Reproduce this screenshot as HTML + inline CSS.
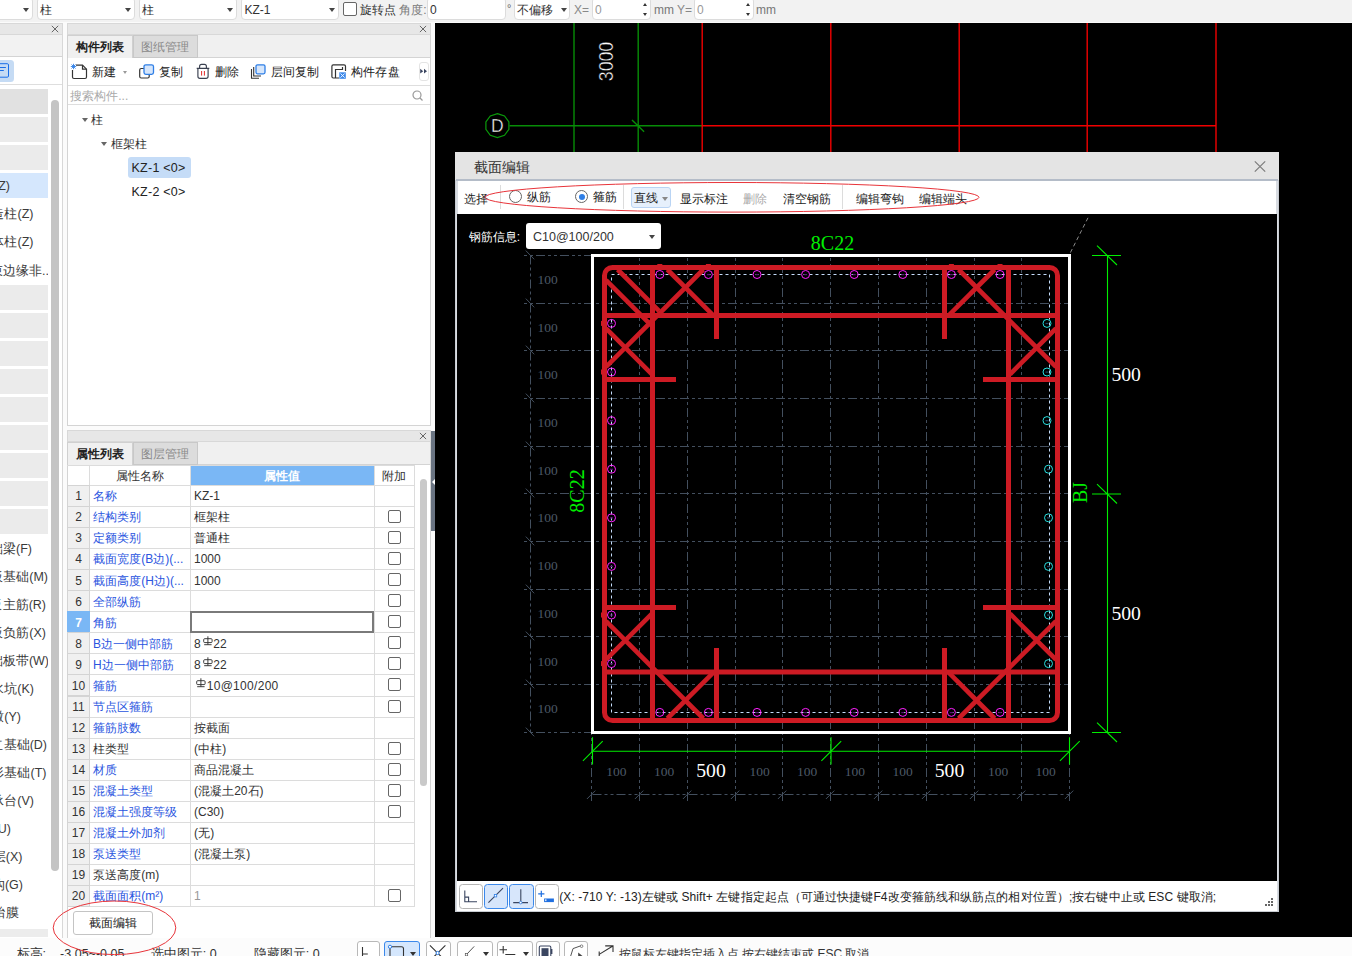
<!DOCTYPE html>
<html><head><meta charset="utf-8"><title>截面编辑</title>
<style>
*{box-sizing:border-box;margin:0;padding:0}
html,body{width:1352px;height:956px;overflow:hidden;background:#fbfbfb;font-family:"Liberation Sans",sans-serif;font-size:12px;color:#333}
.a{position:absolute}
.t{position:absolute;white-space:nowrap;line-height:16px;height:16px}
.combo{position:absolute;background:#fff;border:1px solid #dcdcdc;border-radius:4px}
.car{position:absolute;width:0;height:0;border-left:3px solid transparent;border-right:3px solid transparent;border-top:4px solid #444}
.cb{position:absolute;width:13px;height:13px;border:1px solid #666;border-radius:2px;background:#fff}
.hdr{position:absolute;background:#e7e7e7;border:1px solid #d8d8d8}
.bar{position:absolute;left:0;width:48px;height:25px;background:#ebebeb}
.lt{position:absolute;white-space:nowrap;font-size:12.5px;line-height:18px;color:#3a3a3a}
.rn{position:absolute;left:68px;width:22px;height:22px;background:#f0f0f0;border:1px solid #d0d0d0;text-align:center;font-size:12px;line-height:20px;color:#333}
.nm{position:absolute;left:93px;white-space:nowrap;font-size:12px;line-height:20px;color:#2a5bd7}
.vl{position:absolute;left:194px;white-space:nowrap;font-size:12px;line-height:20px;color:#333}
.btn{position:absolute;background:#fff;border:1px solid #c4c4c4;border-radius:3px}
.j{text-align-last:justify;text-justify:inter-character}
</style></head><body>

<div class="a" style="left:0;top:0;width:1352px;height:21.6px;background:#f2f2f2"></div>
<div class="combo" style="left:-10px;top:-3px;width:43px;height:23px"></div>
<div class="car" style="left:22.5px;top:8px"></div>
<div class="combo" style="left:37px;top:-3px;width:98px;height:23px"></div>
<div class="t j" style="left:40px;top:2px;font-size:12px;color:#333;width:12.25px">柱</div>
<div class="car" style="left:124.5px;top:8px"></div>
<div class="combo" style="left:139px;top:-3px;width:98px;height:23px"></div>
<div class="t j" style="left:142px;top:2px;font-size:12px;color:#333;width:12.25px">柱</div>
<div class="car" style="left:226.5px;top:8px"></div>
<div class="combo" style="left:241px;top:-3px;width:98px;height:23px"></div>
<div class="t" style="left:244.5px;top:2px;font-size:12px;color:#333">KZ-1</div>
<div class="car" style="left:328.5px;top:8px"></div>
<div class="cb" style="left:343px;top:2px;width:14px;height:14px"></div>
<div class="t j" style="left:360px;top:2px;font-size:12px;width:36.25px">旋转点</div>
<div class="t j" style="left:399px;top:2px;font-size:12px;color:#7a7a7a;width:27.59px">角度:</div>
<div class="combo" style="left:426.5px;top:-3px;width:79.0px;height:23px"></div>
<div class="t" style="left:430px;top:2px;font-size:12px;color:#333">0</div>
<div class="t" style="left:507px;top:0px;font-size:11px;color:#666">°</div>
<div class="combo" style="left:514px;top:-3px;width:56px;height:23px"></div>
<div class="t j" style="left:517px;top:2px;font-size:12px;color:#333;width:36.25px">不偏移</div>
<div class="car" style="left:561px;top:8px"></div>
<div class="t" style="left:574px;top:2px;font-size:12px;color:#888">X=</div>
<div class="combo" style="left:592px;top:-3px;width:59px;height:23px"></div>
<div class="t" style="left:595px;top:2px;font-size:12px;color:#999">0</div>
<div class="t" style="left:654px;top:2px;font-size:12px;color:#777">mm</div>
<div class="t" style="left:677px;top:2px;font-size:12px;color:#888">Y=</div>
<div class="combo" style="left:694px;top:-3px;width:59.5px;height:23px"></div>
<div class="t" style="left:697px;top:2px;font-size:12px;color:#999">0</div>
<div class="t" style="left:756px;top:2px;font-size:12px;color:#777">mm</div>
<div class="a" style="left:643.0px;top:3px;width:0;height:0;border-left:2.5px solid transparent;border-right:2.5px solid transparent;border-bottom:3.5px solid #333"></div>
<div class="a" style="left:643.0px;top:13px;width:0;height:0;border-left:2.5px solid transparent;border-right:2.5px solid transparent;border-top:3.5px solid #333"></div>
<div class="a" style="left:745.5px;top:3px;width:0;height:0;border-left:2.5px solid transparent;border-right:2.5px solid transparent;border-bottom:3.5px solid #333"></div>
<div class="a" style="left:745.5px;top:13px;width:0;height:0;border-left:2.5px solid transparent;border-right:2.5px solid transparent;border-top:3.5px solid #333"></div>
<div class="a" style="left:0;top:23px;width:63px;height:915px;background:#fff;border-right:1px solid #d8d8d8"></div>
<div class="hdr" style="left:-1px;top:23px;width:64px;height:12px"></div>
<div class="a" style="left:0;top:35px;width:62px;height:22px;background:#f2f2f2;border-bottom:1px solid #d4d4d4"></div>
<div class="a" style="left:0;top:84.2px;width:62px;height:1px;background:#dedede"></div>
<svg class="a" style="left:49px;top:23.3px" width="12" height="12" viewBox="-6 -6 12 12"><path d="M-3.2 -3.2L3.2 3.2M3.2 -3.2L-3.2 3.2" stroke="#666" stroke-width="1" fill="none"/></svg>
<div class="a" style="left:-6px;top:60px;width:20px;height:22px;background:#c5dbf4;border-radius:3.5px"></div>
<svg class="a" style="left:0;top:62px" width="12" height="18" viewBox="0 0 12 18"><path d="M-2 1.7H7.3Q8.5 1.7 8.5 2.9V14Q8.5 15.2 7.3 15.2H-2" stroke="#1a6fe8" stroke-width="1" fill="none"/><path d="M0 5.5H5.9M0 8.5H3.8" stroke="#1a6fe8" stroke-width="1"/></svg>
<div class="bar" style="top:89px;background:#e1e1e1"></div>
<div class="bar" style="top:117px;background:#ebebeb"></div>
<div class="bar" style="top:145px;background:#ebebeb"></div>
<div class="bar" style="top:173px;background:#d5e7fd"></div>
<div class="bar" style="top:285px;background:#ebebeb"></div>
<div class="bar" style="top:313px;background:#ebebeb"></div>
<div class="bar" style="top:341px;background:#ebebeb"></div>
<div class="bar" style="top:369px;background:#ebebeb"></div>
<div class="bar" style="top:397px;background:#ebebeb"></div>
<div class="bar" style="top:425px;background:#ebebeb"></div>
<div class="bar" style="top:453px;background:#ebebeb"></div>
<div class="bar" style="top:481px;background:#ebebeb"></div>
<div class="bar" style="top:509px;background:#ebebeb"></div>
<div class="bar" style="top:929px;height:8px;background:#ececec"></div>
<div class="a" style="left:0;top:176.5px;width:48px;height:18px;overflow:hidden"><div class="lt j" style="right:38px;top:0;width:29.22px">柱(Z)</div></div>
<div class="a" style="left:0;top:205px;width:48px;height:18px;overflow:hidden"><div class="lt j" style="right:14.5px;top:0;width:55.22px">构造柱(Z)</div></div>
<div class="a" style="left:0;top:233px;width:48px;height:18px;overflow:hidden"><div class="lt j" style="right:14.5px;top:0;width:55.22px">砌体柱(Z)</div></div>
<div class="a" style="left:0;top:261.5px;width:48px;height:18px;overflow:hidden"><div class="lt j" style="right:-1px;top:0;width:72.20px">约束边缘非..</div></div>
<div class="a" style="left:0;top:540px;width:48px;height:18px;overflow:hidden"><div class="lt j" style="right:16px;top:0;width:55.22px">基础梁(F)</div></div>
<div class="a" style="left:0;top:568px;width:48px;height:18px;overflow:hidden"><div class="lt j" style="right:0px;top:0;width:71.00px">筏板基础(M)</div></div>
<div class="a" style="left:0;top:596px;width:48px;height:18px;overflow:hidden"><div class="lt j" style="right:2px;top:0;width:69.61px">筏板主筋(R)</div></div>
<div class="a" style="left:0;top:624px;width:48px;height:18px;overflow:hidden"><div class="lt j" style="right:2px;top:0;width:68.92px">筏板负筋(X)</div></div>
<div class="a" style="left:0;top:652px;width:48px;height:18px;overflow:hidden"><div class="lt j" style="right:-1px;top:0;width:72.38px">基础板带(W)</div></div>
<div class="a" style="left:0;top:680px;width:48px;height:18px;overflow:hidden"><div class="lt j" style="right:14px;top:0;width:55.92px">集水坑(K)</div></div>
<div class="a" style="left:0;top:708px;width:48px;height:18px;overflow:hidden"><div class="lt j" style="right:27px;top:0;width:42.92px">柱墩(Y)</div></div>
<div class="a" style="left:0;top:736px;width:48px;height:18px;overflow:hidden"><div class="lt j" style="right:1px;top:0;width:69.61px">独立基础(D)</div></div>
<div class="a" style="left:0;top:764px;width:48px;height:18px;overflow:hidden"><div class="lt j" style="right:1.5px;top:0;width:68.22px">条形基础(T)</div></div>
<div class="a" style="left:0;top:792px;width:48px;height:18px;overflow:hidden"><div class="lt j" style="right:14px;top:0;width:55.92px">桩承台(V)</div></div>
<div class="a" style="left:0;top:820px;width:48px;height:18px;overflow:hidden"><div class="lt j" style="right:37px;top:0;width:30.61px">桩(U)</div></div>
<div class="a" style="left:0;top:848px;width:48px;height:18px;overflow:hidden"><div class="lt j" style="right:25.5px;top:0;width:42.92px">垫层(X)</div></div>
<div class="a" style="left:0;top:876px;width:48px;height:18px;overflow:hidden"><div class="lt j" style="right:25px;top:0;width:44.31px">地沟(G)</div></div>
<div class="a" style="left:0;top:904px;width:48px;height:18px;overflow:hidden"><div class="lt j" style="right:29.5px;top:0;width:39.25px">砖胎膜</div></div>
<div class="a" style="left:51px;top:100px;width:8px;height:770.5px;background:#c4c4c4;border-radius:4px"></div>
<div class="a" style="left:67px;top:23px;width:364px;height:403px;background:#fff;border:1px solid #d4d4d4"></div>
<div class="hdr" style="left:67px;top:23px;width:364px;height:12px"></div>
<svg class="a" style="left:417px;top:23.2px" width="12" height="12" viewBox="-6 -6 12 12"><path d="M-3.1 -3.1L3.1 3.1M3.1 -3.1L-3.1 3.1" stroke="#666" stroke-width="1" fill="none"/></svg>
<div class="a" style="left:68px;top:35px;width:362px;height:23px;background:#f0f0f0;border-bottom:1px solid #d4d4d4"></div>
<div class="a" style="left:67px;top:35px;width:66px;height:23px;background:#f0f0f0;border:1px solid #d0d0d0;border-bottom:none"></div>
<div class="a" style="left:132.5px;top:35px;width:65px;height:22.5px;background:#dcdcdc;border:1px solid #c8c8c8"></div>
<div class="t j" style="left:76px;top:38.5px;font-size:12px;font-weight:bold;color:#222;width:48.25px">构件列表</div>
<div class="t j" style="left:141px;top:38.5px;font-size:12px;color:#8a8a8a;width:48.25px">图纸管理</div>
<div class="a" style="left:68px;top:85px;width:362px;height:1px;background:#dedede"></div>
<div class="a" style="left:68px;top:104px;width:362px;height:1px;background:#dedede"></div>
<div class="t j" style="left:92px;top:64px;font-size:12px;color:#222;width:24.25px">新建</div>
<div class="t j" style="left:158.7px;top:64px;font-size:12px;color:#222;width:24.25px">复制</div>
<div class="t j" style="left:215px;top:64px;font-size:12px;color:#222;width:24.25px">删除</div>
<div class="t j" style="left:271px;top:64px;font-size:12px;color:#222;width:48.25px">层间复制</div>
<div class="t j" style="left:351.3px;top:64px;font-size:12px;color:#222;width:48.25px">构件存盘</div>
<div class="car" style="left:123px;top:71px;border-top-color:#999;border-left-width:2.7px;border-right-width:2.7px;border-top-width:3.5px"></div>
<svg class="a" style="left:70px;top:62px" width="20" height="20" viewBox="0 0 20 20"><path d="M6 3.2H12.5L16.5 7.2V15Q16.5 16.5 15 16.5H4Q2.5 16.5 2.5 15V8" stroke="#333" stroke-width="1.2" fill="none"/><path d="M12.5 3.2V7.2H16.5" stroke="#333" stroke-width="1.2" fill="none"/><path d="M1.5 2.5L5.5 6.5M5.5 2.5L1.5 6.5M3.5 1.8V7.2M0.8 4.5H6.2" stroke="#2f7fe6" stroke-width="0.9"/></svg>
<svg class="a" style="left:138px;top:62px" width="18" height="20" viewBox="0 0 18 20"><rect x="1.7" y="6.5" width="9.5" height="9.5" rx="1.5" stroke="#333" stroke-width="1.2" fill="none"/><rect x="6" y="2.8" width="9.5" height="9.5" rx="1.8" stroke="#2f7fe6" stroke-width="1.3" fill="#d6e6fb"/></svg>
<svg class="a" style="left:195px;top:62px" width="16" height="20" viewBox="0 0 16 20"><path d="M1.7 6.4H14.3M4.6 6.4V4.4Q4.6 2.4 6.6 2.4H9.4Q11.4 2.4 11.4 4.4V6.4M2.9 6.4V14.3Q2.9 16.4 5 16.4H11Q13.1 16.4 13.1 14.3V6.4" stroke="#3a4050" stroke-width="1.15" fill="none"/><path d="M6.6 9V13.6M9.4 9V13.6" stroke="#e02020" stroke-width="0.95"/></svg>
<svg class="a" style="left:249px;top:62px" width="18" height="20" viewBox="0 0 18 20"><path d="M2.5 7V16.3H10M4.7 5V14H12" stroke="#333" stroke-width="1.1" fill="none"/><rect x="7" y="2.8" width="9" height="9" rx="1.5" stroke="#2f7fe6" stroke-width="1.3" fill="#d6e6fb"/></svg>
<svg class="a" style="left:330px;top:62px" width="18" height="20" viewBox="0 0 18 20"><path d="M9 16H3.3Q1.9 16 1.9 14.5V4.2Q1.9 2.8 3.3 2.8H14Q15.5 2.8 15.5 4.2V9" stroke="#333" stroke-width="1.2" fill="none"/><path d="M5.5 16V7.5H12.5V5" stroke="#333" stroke-width="1.2" fill="none"/><rect x="9.3" y="10.3" width="6.5" height="6.5" fill="#3b88ea"/><path d="M10.5 11.5L14.6 15.6M14.6 11.5L10.5 15.6" stroke="#fff" stroke-width="0.9"/></svg>
<div class="a" style="left:418.5px;top:61.5px;width:10px;height:19px;background:#fff;border:1px solid #e4e4e4;border-radius:3px"></div>
<svg class="a" style="left:419px;top:66px" width="10" height="10" viewBox="0 0 10 10"><path d="M1.2 2.8L4.2 5.2L1.2 7.6ZM5 2.8L8 5.2L5 7.6Z" fill="#3a4560"/></svg>
<div class="t j" style="left:70px;top:87.5px;font-size:12px;color:#aaa;width:58.27px">搜索构件...</div>
<svg class="a" style="left:411px;top:89px" width="14" height="14" viewBox="0 0 14 14"><circle cx="6" cy="6" r="4" stroke="#999" stroke-width="1.2" fill="none"/><path d="M9 9L11.5 11.5" stroke="#999" stroke-width="1.3"/></svg>
<div class="car" style="left:81.7px;top:118px;border-top-color:#666"></div>
<div class="t j" style="left:91px;top:111.5px;font-size:12px;width:12.25px">柱</div>
<div class="car" style="left:101px;top:142px;border-top-color:#666"></div>
<div class="t j" style="left:110.5px;top:135.5px;font-size:12px;width:36.25px">框架柱</div>
<div class="a" style="left:128px;top:157px;width:63px;height:21px;background:#c5dcf7;border-radius:3px"></div>
<div class="t" style="left:131.5px;top:159.5px;font-size:12.5px;letter-spacing:0.25px;color:#222">KZ-1 &lt;0&gt;</div>
<div class="t" style="left:131.5px;top:183.5px;font-size:12.5px;letter-spacing:0.25px;color:#222">KZ-2 &lt;0&gt;</div>
<div class="a" style="left:67px;top:430px;width:364px;height:508px;background:#fff;border:1px solid #d4d4d4;border-bottom:none"></div>
<div class="hdr" style="left:67px;top:430px;width:364px;height:12px"></div>
<svg class="a" style="left:417px;top:430px" width="12" height="12" viewBox="-6 -6 12 12"><path d="M-3.1 -3.1L3.1 3.1M3.1 -3.1L-3.1 3.1" stroke="#666" stroke-width="1" fill="none"/></svg>
<div class="a" style="left:68px;top:442px;width:362px;height:23px;background:#f0f0f0;border-bottom:1px solid #d4d4d4"></div>
<div class="a" style="left:67px;top:442px;width:66px;height:23px;background:#f0f0f0;border:1px solid #d0d0d0;border-bottom:none"></div>
<div class="a" style="left:132.5px;top:442px;width:65px;height:22.5px;background:#dcdcdc;border:1px solid #c8c8c8"></div>
<div class="t j" style="left:76px;top:445.5px;font-size:12px;font-weight:bold;color:#222;width:48.25px">属性列表</div>
<div class="t j" style="left:141px;top:445.5px;font-size:12px;color:#8a8a8a;width:48.25px">图层管理</div>
<div class="a" style="left:190px;top:465px;width:184px;height:21px;background:#7ab7f5"></div>
<div class="t j" style="left:116px;top:467.5px;font-size:12px;width:48.25px">属性名称</div>
<div class="t j" style="left:263.5px;top:467.5px;font-size:12px;color:#fff;font-weight:bold;width:36.25px">属性值</div>
<div class="t j" style="left:382px;top:467.5px;font-size:12px;width:24.25px">附加</div>
<div class="a" style="left:67px;top:465.00px;width:348px;height:1px;background:#dcdcdc"></div>
<div class="a" style="left:67px;top:485.00px;width:348px;height:1px;background:#dcdcdc"></div>
<div class="a" style="left:67px;top:506.05px;width:348px;height:1px;background:#dcdcdc"></div>
<div class="a" style="left:67px;top:527.10px;width:348px;height:1px;background:#dcdcdc"></div>
<div class="a" style="left:67px;top:548.15px;width:348px;height:1px;background:#dcdcdc"></div>
<div class="a" style="left:67px;top:569.20px;width:348px;height:1px;background:#dcdcdc"></div>
<div class="a" style="left:67px;top:590.25px;width:348px;height:1px;background:#dcdcdc"></div>
<div class="a" style="left:67px;top:611.30px;width:348px;height:1px;background:#dcdcdc"></div>
<div class="a" style="left:67px;top:632.35px;width:348px;height:1px;background:#dcdcdc"></div>
<div class="a" style="left:67px;top:653.40px;width:348px;height:1px;background:#dcdcdc"></div>
<div class="a" style="left:67px;top:674.45px;width:348px;height:1px;background:#dcdcdc"></div>
<div class="a" style="left:67px;top:695.50px;width:348px;height:1px;background:#dcdcdc"></div>
<div class="a" style="left:67px;top:716.55px;width:348px;height:1px;background:#dcdcdc"></div>
<div class="a" style="left:67px;top:737.60px;width:348px;height:1px;background:#dcdcdc"></div>
<div class="a" style="left:67px;top:758.65px;width:348px;height:1px;background:#dcdcdc"></div>
<div class="a" style="left:67px;top:779.70px;width:348px;height:1px;background:#dcdcdc"></div>
<div class="a" style="left:67px;top:800.75px;width:348px;height:1px;background:#dcdcdc"></div>
<div class="a" style="left:67px;top:821.80px;width:348px;height:1px;background:#dcdcdc"></div>
<div class="a" style="left:67px;top:842.85px;width:348px;height:1px;background:#dcdcdc"></div>
<div class="a" style="left:67px;top:863.90px;width:348px;height:1px;background:#dcdcdc"></div>
<div class="a" style="left:67px;top:884.95px;width:348px;height:1px;background:#dcdcdc"></div>
<div class="a" style="left:67px;top:906.00px;width:348px;height:1px;background:#dcdcdc"></div>
<div class="a" style="left:89px;top:465px;width:1px;height:442px;background:#dcdcdc"></div>
<div class="a" style="left:190px;top:465px;width:1px;height:442px;background:#dcdcdc"></div>
<div class="a" style="left:373.5px;top:465px;width:1px;height:442px;background:#dcdcdc"></div>
<div class="a" style="left:414px;top:465px;width:1px;height:442px;background:#dcdcdc"></div>
<div class="a" style="left:67px;top:485.00px;width:22.5px;height:22px;background:#f0f0f0;border:1px solid #d4d4d4"></div>
<div class="t" style="left:67px;width:23px;text-align:center;top:488.30px">1</div>
<div class="t j" style="left:93px;top:488.30px;color:#2a55e0;width:24.25px">名称</div>
<div class="t" style="left:194px;top:488.30px;color:#333">KZ-1</div>
<div class="a" style="left:67px;top:506.05px;width:22.5px;height:22px;background:#f0f0f0;border:1px solid #d4d4d4"></div>
<div class="t" style="left:67px;width:23px;text-align:center;top:509.35px">2</div>
<div class="t j" style="left:93px;top:509.35px;color:#2a55e0;width:48.25px">结构类别</div>
<div class="t j" style="left:194px;top:509.35px;color:#333;width:36.25px">框架柱</div>
<div class="cb" style="left:387.5px;top:510.05px"></div>
<div class="a" style="left:67px;top:527.10px;width:22.5px;height:22px;background:#f0f0f0;border:1px solid #d4d4d4"></div>
<div class="t" style="left:67px;width:23px;text-align:center;top:530.40px">3</div>
<div class="t j" style="left:93px;top:530.40px;color:#2a55e0;width:48.25px">定额类别</div>
<div class="t j" style="left:194px;top:530.40px;color:#333;width:36.25px">普通柱</div>
<div class="cb" style="left:387.5px;top:531.10px"></div>
<div class="a" style="left:67px;top:548.15px;width:22.5px;height:22px;background:#f0f0f0;border:1px solid #d4d4d4"></div>
<div class="t" style="left:67px;width:23px;text-align:center;top:551.45px">4</div>
<div class="t j" style="left:93px;top:551.45px;color:#2a55e0;width:90.25px">截面宽度(B边)(...</div>
<div class="t" style="left:194px;top:551.45px;color:#333">1000</div>
<div class="cb" style="left:387.5px;top:552.15px"></div>
<div class="a" style="left:67px;top:569.20px;width:22.5px;height:22px;background:#f0f0f0;border:1px solid #d4d4d4"></div>
<div class="t" style="left:67px;width:23px;text-align:center;top:572.50px">5</div>
<div class="t j" style="left:93px;top:572.50px;color:#2a55e0;width:90.91px">截面高度(H边)(...</div>
<div class="t" style="left:194px;top:572.50px;color:#333">1000</div>
<div class="cb" style="left:387.5px;top:573.20px"></div>
<div class="a" style="left:67px;top:590.25px;width:22.5px;height:22px;background:#f0f0f0;border:1px solid #d4d4d4"></div>
<div class="t" style="left:67px;width:23px;text-align:center;top:593.55px">6</div>
<div class="t j" style="left:93px;top:593.55px;color:#2a55e0;width:48.25px">全部纵筋</div>
<div class="cb" style="left:387.5px;top:594.25px"></div>
<div class="a" style="left:67px;top:611.30px;width:22.5px;height:22px;background:#7ab7f5"></div>
<div class="t" style="left:67px;width:23px;text-align:center;top:614.60px;color:#fff;font-weight:bold">7</div>
<div class="a" style="left:190px;top:611.30px;width:184px;height:22px;border:2px solid #7a7a7a;background:#fff"></div>
<div class="t j" style="left:93px;top:614.60px;color:#2a55e0;width:24.25px">角筋</div>
<div class="cb" style="left:387.5px;top:615.30px"></div>
<div class="a" style="left:67px;top:632.35px;width:22.5px;height:22px;background:#f0f0f0;border:1px solid #d4d4d4"></div>
<div class="t" style="left:67px;width:23px;text-align:center;top:635.65px">8</div>
<div class="t j" style="left:93px;top:635.65px;color:#2a55e0;width:80.27px">B边一侧中部筋</div>
<div class="t" style="left:194px;top:635.65px">8</div>
<svg class="a" style="left:202.8px;top:635.55px" width="10" height="10" viewBox="0 0 10 10"><path d="M4.9 0.3V8.7M1.2 8.7H8.6" stroke="#333" stroke-width="0.95" fill="none"/><rect x="0.7" y="2.7" width="8.4" height="3.9" rx="1" stroke="#333" stroke-width="0.95" fill="none"/></svg>
<div class="t" style="left:213.3px;top:635.65px">22</div>
<div class="cb" style="left:387.5px;top:636.35px"></div>
<div class="a" style="left:67px;top:653.40px;width:22.5px;height:22px;background:#f0f0f0;border:1px solid #d4d4d4"></div>
<div class="t" style="left:67px;width:23px;text-align:center;top:656.70px">9</div>
<div class="t j" style="left:93px;top:656.70px;color:#2a55e0;width:80.92px">H边一侧中部筋</div>
<div class="t" style="left:194px;top:656.70px">8</div>
<svg class="a" style="left:202.8px;top:656.60px" width="10" height="10" viewBox="0 0 10 10"><path d="M4.9 0.3V8.7M1.2 8.7H8.6" stroke="#333" stroke-width="0.95" fill="none"/><rect x="0.7" y="2.7" width="8.4" height="3.9" rx="1" stroke="#333" stroke-width="0.95" fill="none"/></svg>
<div class="t" style="left:213.3px;top:656.70px">22</div>
<div class="cb" style="left:387.5px;top:657.40px"></div>
<div class="a" style="left:67px;top:674.45px;width:22.5px;height:22px;background:#f0f0f0;border:1px solid #d4d4d4"></div>
<div class="t" style="left:67px;width:23px;text-align:center;top:677.75px">10</div>
<div class="t j" style="left:93px;top:677.75px;color:#2a55e0;width:24.25px">箍筋</div>
<svg class="a" style="left:195.7px;top:677.65px" width="10" height="10" viewBox="0 0 10 10"><path d="M4.9 0.3V8.7M1.2 8.7H8.6" stroke="#333" stroke-width="0.95" fill="none"/><rect x="0.7" y="2.7" width="8.4" height="3.9" rx="1" stroke="#333" stroke-width="0.95" fill="none"/></svg>
<div class="t" style="left:206.7px;top:677.75px;letter-spacing:0.3px">10@100/200</div>
<div class="cb" style="left:387.5px;top:678.45px"></div>
<div class="a" style="left:67px;top:695.50px;width:22.5px;height:22px;background:#f0f0f0;border:1px solid #d4d4d4"></div>
<div class="t" style="left:67px;width:23px;text-align:center;top:698.80px">11</div>
<div class="t j" style="left:93px;top:698.80px;color:#2a55e0;width:60.25px">节点区箍筋</div>
<div class="cb" style="left:387.5px;top:699.50px"></div>
<div class="a" style="left:67px;top:716.55px;width:22.5px;height:22px;background:#f0f0f0;border:1px solid #d4d4d4"></div>
<div class="t" style="left:67px;width:23px;text-align:center;top:719.85px">12</div>
<div class="t j" style="left:93px;top:719.85px;color:#2a55e0;width:48.25px">箍筋肢数</div>
<div class="t j" style="left:194px;top:719.85px;color:#333;width:36.25px">按截面</div>
<div class="a" style="left:67px;top:737.60px;width:22.5px;height:22px;background:#f0f0f0;border:1px solid #d4d4d4"></div>
<div class="t" style="left:67px;width:23px;text-align:center;top:740.90px">13</div>
<div class="t j" style="left:93px;top:740.90px;color:#333;width:36.25px">柱类型</div>
<div class="t j" style="left:194px;top:740.90px;color:#333;width:32.25px">(中柱)</div>
<div class="cb" style="left:387.5px;top:741.60px"></div>
<div class="a" style="left:67px;top:758.65px;width:22.5px;height:22px;background:#f0f0f0;border:1px solid #d4d4d4"></div>
<div class="t" style="left:67px;width:23px;text-align:center;top:761.95px">14</div>
<div class="t j" style="left:93px;top:761.95px;color:#2a55e0;width:24.25px">材质</div>
<div class="t j" style="left:194px;top:761.95px;color:#333;width:60.25px">商品混凝土</div>
<div class="cb" style="left:387.5px;top:762.65px"></div>
<div class="a" style="left:67px;top:779.70px;width:22.5px;height:22px;background:#f0f0f0;border:1px solid #d4d4d4"></div>
<div class="t" style="left:67px;width:23px;text-align:center;top:783.00px">15</div>
<div class="t j" style="left:93px;top:783.00px;color:#2a55e0;width:60.25px">混凝土类型</div>
<div class="t j" style="left:194px;top:783.00px;color:#333;width:69.59px">(混凝土20石)</div>
<div class="cb" style="left:387.5px;top:783.70px"></div>
<div class="a" style="left:67px;top:800.75px;width:22.5px;height:22px;background:#f0f0f0;border:1px solid #d4d4d4"></div>
<div class="t" style="left:67px;width:23px;text-align:center;top:804.05px">16</div>
<div class="t j" style="left:93px;top:804.05px;color:#2a55e0;width:84.25px">混凝土强度等级</div>
<div class="t" style="left:194px;top:804.05px;color:#333">(C30)</div>
<div class="cb" style="left:387.5px;top:804.75px"></div>
<div class="a" style="left:67px;top:821.80px;width:22.5px;height:22px;background:#f0f0f0;border:1px solid #d4d4d4"></div>
<div class="t" style="left:67px;width:23px;text-align:center;top:825.10px">17</div>
<div class="t j" style="left:93px;top:825.10px;color:#2a55e0;width:72.25px">混凝土外加剂</div>
<div class="t j" style="left:194px;top:825.10px;color:#333;width:20.25px">(无)</div>
<div class="a" style="left:67px;top:842.85px;width:22.5px;height:22px;background:#f0f0f0;border:1px solid #d4d4d4"></div>
<div class="t" style="left:67px;width:23px;text-align:center;top:846.15px">18</div>
<div class="t j" style="left:93px;top:846.15px;color:#2a55e0;width:48.25px">泵送类型</div>
<div class="t j" style="left:194px;top:846.15px;color:#333;width:56.25px">(混凝土泵)</div>
<div class="a" style="left:67px;top:863.90px;width:22.5px;height:22px;background:#f0f0f0;border:1px solid #d4d4d4"></div>
<div class="t" style="left:67px;width:23px;text-align:center;top:867.20px">19</div>
<div class="t j" style="left:93px;top:867.20px;color:#333;width:66.25px">泵送高度(m)</div>
<div class="a" style="left:67px;top:884.95px;width:22.5px;height:22px;background:#f0f0f0;border:1px solid #d4d4d4"></div>
<div class="t" style="left:67px;width:23px;text-align:center;top:888.25px">20</div>
<div class="t j" style="left:93px;top:888.25px;color:#2a55e0;width:70.23px">截面面积(m²)</div>
<div class="t" style="left:194px;top:888.25px;color:#999">1</div>
<div class="cb" style="left:387.5px;top:888.95px"></div>
<div class="a" style="left:68px;top:907.5px;width:362px;height:30px;background:#fff"></div>
<div class="a" style="left:420px;top:478.5px;width:7px;height:307px;background:#c9c9c9;border-radius:3.5px"></div>
<div class="btn" style="left:73px;top:911px;width:80px;height:24px"></div>
<div class="t j" style="left:89px;top:915px;font-size:12px;color:#222;width:48.25px">截面编辑</div>
<div class="a" style="left:431.4px;top:431px;width:4px;height:100px;background:#6a7482"></div>
<div class="a" style="left:431.6px;top:478.5px;width:0;height:0;border-top:3px solid transparent;border-bottom:3px solid transparent;border-right:3px solid #fff"></div>
<div class="a" style="left:0;top:937.5px;width:1352px;height:19px;background:#fcfcfc"></div>
<div class="t j" style="left:16.5px;top:946px;font-size:12.5px;width:107.91px">标高:&nbsp;&nbsp;&nbsp; -3.05~-0.05</div>
<div class="t j" style="left:150.5px;top:946px;font-size:12.5px;width:66.16px">选中图元: 0</div>
<div class="t j" style="left:253.5px;top:946px;font-size:12.5px;width:66.16px">隐藏图元: 0</div>
<div class="a" style="left:356.6px;top:941px;width:23.6px;height:24px;background:#fff;border:1px solid #b8b8b8;border-radius:3px"></div>
<div class="a" style="left:383.5px;top:941px;width:36.0px;height:24px;background:#d5e7fd;border:1px solid #3b88ea;border-radius:3px"></div>
<div class="a" style="left:425.7px;top:941px;width:24.9px;height:24px;background:#fff;border:1px solid #b8b8b8;border-radius:3px"></div>
<div class="a" style="left:457.2px;top:941px;width:36.1px;height:24px;background:#fff;border:1px solid #b8b8b8;border-radius:3px"></div>
<div class="a" style="left:496.6px;top:941px;width:36.0px;height:24px;background:#fff;border:1px solid #b8b8b8;border-radius:3px"></div>
<div class="a" style="left:535.5px;top:941px;width:24.0px;height:24px;background:#fff;border:1px solid #b8b8b8;border-radius:3px"></div>
<div class="a" style="left:563.7px;top:941px;width:24.0px;height:24px;background:#fff;border:1px solid #b8b8b8;border-radius:3px"></div>
<svg class="a" style="left:356px;top:941px" width="240" height="15" viewBox="356 941 240 15"><g fill="none" stroke="#333" stroke-width="1.1"><path d="M362.5 947V956M362.5 954H367.8"/><path d="M390 956V948.5Q390 946.8 392 946.8H401.5Q403.5 946.8 403.5 948.8V956"/><path d="M429.9 945.3L445.4 960.8M445.4 945.3L429.9 960.8"/><path d="M467 954L474.2 946.4" stroke="#555" stroke-width="1"/><path d="M499.5 949.7H507M503.2 946V953.5M505.3 954.5H515.3"/><rect x="539.3" y="946" width="11.5" height="12" rx="1.2" stroke="#3a4560"/><path d="M570.7 956L573 948.6L580.5 945.9" stroke="#555" stroke-width="1"/></g><rect x="541.5" y="948.2" width="7" height="8" fill="#3a4560"/><rect x="550.8" y="949" width="1.6" height="5" fill="#3a4560"/><circle cx="390" cy="946.8" r="1.6" fill="#fff" stroke="#2f7fe6"/><circle cx="437.6" cy="953" r="1.6" fill="#fff" stroke="#2f7fe6"/><rect x="465.3" y="953.5" width="2.4" height="2.4" fill="#fff" stroke="#555" stroke-width="0.7"/><circle cx="581.6" cy="946.2" r="1.3" fill="#fff" stroke="#555" stroke-width="0.7"/><path d="M578.2 952.5L582.5 956L578.2 959.5Z" fill="#444"/></svg>
<div class="car" style="left:409.5px;top:952px;border-top-color:#333"></div>
<div class="car" style="left:483px;top:952px;border-top-color:#333"></div>
<div class="car" style="left:522.5px;top:952px;border-top-color:#333"></div>
<svg class="a" style="left:598px;top:943px" width="18" height="13" viewBox="598 943 18 13"><path d="M599.2 954.4L612.8 946M605.2 945.9H613V952" stroke="#333" stroke-width="1.1" fill="none"/><path d="M599.2 951.5V956" stroke="#333" stroke-width="1.1"/></svg>
<div class="t j" style="left:618.5px;top:946px;font-size:12px;width:250.94px">按鼠标左键指定插入点,按右键结束或 ESC 取消</div><div class="a" style="left:435px;top:23px;width:917px;height:914px;background:#000"></div>
<svg class="a" style="left:436px;top:23px" width="916" height="135" viewBox="436 23 916 135">
<g stroke="#078c07" stroke-width="1.4" fill="none"><path d="M574 23V158M638.2 23V158M509.5 125.8H702.2M632 120L644.1 131.8"/><polygon points="497.4,113.6 504.5,115.9 508.9,121.9 508.9,129.3 504.5,135.3 497.4,137.6 490.3,135.3 485.9,129.3 485.9,121.9 490.3,115.9" stroke="#0a9a0a" stroke-width="1.2"/></g>
<g stroke="#f00000" stroke-width="1.4" fill="none"><path d="M702.2 23V158M830.8 23V158M959.2 23V158M1087.2 23V158M1216 23V158M702.2 125.8H1216"/></g>
<text x="497.4" y="131.8" font-family="Liberation Sans, sans-serif" font-size="17.5" fill="#fff" stroke="#000" stroke-width="0.4" text-anchor="middle">D</text>
<text transform="translate(613.2 81.2) rotate(-90)" font-family="Liberation Sans, sans-serif" font-size="20" fill="#fff" stroke="#000" stroke-width="0.45" textLength="39.4" lengthAdjust="spacingAndGlyphs">3000</text>
</svg>
<div class="a" style="left:455px;top:152px;width:824px;height:760px;background:#d8dce2;border:1px solid #c8ccd2"></div>
<div class="a" style="left:455px;top:152px;width:824px;height:28px;background:#e4e4e4"></div>
<div class="a" style="left:456px;top:179px;width:822px;height:2px;background:#b4bcc8"></div>
<div class="t j" style="left:474px;top:158.5px;font-size:14px;color:#333;width:56.25px">截面编辑</div>
<svg class="a" style="left:1252px;top:158px" width="16" height="16" viewBox="1252 158 16 16"><path d="M1254.8 161.3L1265.2 171.7M1265.2 161.3L1254.8 171.7" stroke="#7c7c7c" stroke-width="1.2"/></svg>
<div class="a" style="left:458px;top:181px;width:818px;height:33px;background:#fff"></div>
<div class="t j" style="left:464px;top:190.5px;font-size:12px;color:#222;font-weight:normal;width:24.25px">选择</div>
<div class="a" style="left:500px;top:185px;width:1px;height:24px;background:#dcdcdc"></div>
<div class="a" style="left:509px;top:190px;width:13px;height:13px;border:1px solid #666;border-radius:50%;background:#fff"></div>
<div class="t j" style="left:527px;top:189px;font-size:12px;color:#222;font-weight:normal;width:24.25px">纵筋</div>
<div class="a" style="left:575px;top:190px;width:13px;height:13px;border:1px solid #666;border-radius:50%;background:#fff"></div>
<div class="a" style="left:578.5px;top:193.5px;width:6px;height:6px;border-radius:50%;background:#2f7fe6"></div>
<div class="t j" style="left:593px;top:189px;font-size:12px;color:#111;font-weight:normal;width:24.25px">箍筋</div>
<div class="a" style="left:623px;top:185px;width:1px;height:24px;background:#dcdcdc"></div>
<div class="a" style="left:631px;top:186.5px;width:40px;height:21px;background:#e6f0fc;border:1px solid #b9d4f4;border-radius:3px"></div>
<div class="t j" style="left:634px;top:189.7px;font-size:12px;color:#222;font-weight:normal;width:24.25px">直线</div>
<div class="car" style="left:662.3px;top:197px;border-top-color:#888"></div>
<div class="t j" style="left:680px;top:190.5px;font-size:12px;color:#222;font-weight:normal;width:48.25px">显示标注</div>
<div class="t j" style="left:743px;top:190.5px;font-size:12px;color:#aaa;font-weight:normal;width:24.25px">删除</div>
<div class="t j" style="left:782.5px;top:190.5px;font-size:12px;color:#222;font-weight:normal;width:48.25px">清空钢筋</div>
<div class="a" style="left:842px;top:185px;width:1px;height:24px;background:#dcdcdc"></div>
<div class="t j" style="left:855.5px;top:190.5px;font-size:12px;color:#222;font-weight:normal;width:48.25px">编辑弯钩</div>
<div class="t j" style="left:918.5px;top:190.5px;font-size:12px;color:#222;font-weight:normal;width:48.25px">编辑端头</div>
<svg class="a" style="left:480px;top:180px" width="505" height="35" viewBox="480 180 505 35"><ellipse cx="732" cy="197.3" rx="247" ry="14.8" fill="none" stroke="#e8343a" stroke-width="1"/></svg>
<div class="a" style="left:457px;top:214px;width:820px;height:667px;background:#000"></div>
<div class="t j" style="left:468.5px;top:228.5px;font-size:12px;color:#fff;width:51.59px">钢筋信息:</div>
<div class="a" style="left:526px;top:223px;width:135px;height:26px;background:#fff;border-radius:3px"></div>
<div class="t" style="left:533px;top:228.5px;font-size:12.5px;color:#333">C10@100/200</div>
<div class="car" style="left:649.3px;top:234.5px;border-top-color:#444"></div>
<svg class="a" style="left:457px;top:214px" width="820" height="667" viewBox="457 214 820 667">
<g stroke="#434f5e" stroke-width="1" fill="none" stroke-dasharray="9 3 3 3 3 3">
<path d="M591.5 801V255.5"/>
<path d="M524 255.5H1069.5" stroke-dashoffset="12"/>
<path d="M639.5 801V255.5"/>
<path d="M524 303.5H1069.5" stroke-dashoffset="12"/>
<path d="M687.5 801V255.5"/>
<path d="M524 350.5H1069.5" stroke-dashoffset="12"/>
<path d="M735.5 801V255.5"/>
<path d="M524 398.5H1069.5" stroke-dashoffset="12"/>
<path d="M782.5 801V255.5"/>
<path d="M524 446.5H1069.5" stroke-dashoffset="12"/>
<path d="M830.5 801V255.5"/>
<path d="M524 493.5H1069.5" stroke-dashoffset="12"/>
<path d="M878.5 801V255.5"/>
<path d="M524 541.5H1069.5" stroke-dashoffset="12"/>
<path d="M926.5 801V255.5"/>
<path d="M524 589.5H1069.5" stroke-dashoffset="12"/>
<path d="M974.5 801V255.5"/>
<path d="M524 636.5H1069.5" stroke-dashoffset="12"/>
<path d="M1021.5 801V255.5"/>
<path d="M524 684.5H1069.5" stroke-dashoffset="12"/>
<path d="M1069.5 801V255.5"/>
<path d="M524 732.5H1069.5" stroke-dashoffset="12"/>
<path d="M530.5 255.5V732.5M592.5 794.5H1069.5"/>
</g>
<g stroke="#434f5e" stroke-width="1" fill="none">
<path d="M586.9 799L595.3 790.6M525.8 250.6L534.2 259.3"/>
<path d="M634.9 799L643.3 790.6M525.8 298.6L534.2 307.3"/>
<path d="M682.9 799L691.3 790.6M525.8 345.6L534.2 354.3"/>
<path d="M730.9 799L739.3 790.6M525.8 393.6L534.2 402.3"/>
<path d="M777.9 799L786.3 790.6M525.8 441.6L534.2 450.3"/>
<path d="M825.9 799L834.3 790.6M525.8 488.6L534.2 497.3"/>
<path d="M873.9 799L882.3 790.6M525.8 536.6L534.2 545.3"/>
<path d="M921.9 799L930.3 790.6M525.8 584.6L534.2 593.3"/>
<path d="M969.9 799L978.3 790.6M525.8 631.6L534.2 640.3"/>
<path d="M1016.9 799L1025.3 790.6M525.8 679.6L534.2 688.3"/>
<path d="M1064.9 799L1073.3 790.6M525.8 727.6L534.2 736.3"/>
</g>
<path d="M1070.4 252.6L1088.6 216.6" stroke="#8a8a8a" stroke-width="1" stroke-dasharray="4 3" fill="none"/>
<rect x="592.5" y="255.5" width="477.0" height="477.0" fill="none" stroke="#fff" stroke-width="3"/>
<g font-family="Liberation Serif, serif" font-size="13.5" fill="#4c5866" text-anchor="middle">
<text x="547.7" y="283.9">100</text>
<text x="616.4" y="776">100</text>
<text x="547.7" y="331.6">100</text>
<text x="664.1" y="776">100</text>
<text x="547.7" y="379.2">100</text>
<text x="547.7" y="427.0">100</text>
<text x="759.5" y="776">100</text>
<text x="547.7" y="474.7">100</text>
<text x="807.1" y="776">100</text>
<text x="547.7" y="522.4">100</text>
<text x="854.9" y="776">100</text>
<text x="547.7" y="570.1">100</text>
<text x="902.6" y="776">100</text>
<text x="547.7" y="617.8">100</text>
<text x="547.7" y="665.5">100</text>
<text x="998.0" y="776">100</text>
<text x="547.7" y="713.1">100</text>
<text x="1045.6" y="776">100</text>
</g>
<rect x="611.5" y="274.5" width="438" height="438" fill="none" stroke="#c4dcfa" stroke-width="1" stroke-dasharray="3 3"/>
<g stroke="#cd1b24" stroke-width="5" fill="none" stroke-linecap="butt">
<rect x="604.5" y="267.5" width="453.0" height="453.0" rx="8" ry="8"/>
<path d="M652.5 267.5V720.5M1008.5 267.5V720.5M604.5 315.5H1057.5M604.5 672.0H1057.5"/>
<path d="M716.5 267.5V339M944.5 267.5V339M716.5 720.5V648M944.5 720.5V648"/>
<path d="M604.5 379.5H676M604.5 607.5H676M1057.5 379.5H983M1057.5 607.5H983"/>
</g>
<g stroke="#cd1b24" stroke-width="4.6" fill="none">
<path d="M703.4 269.5L606.0 366.9"/>
<path d="M667.3 269.5L714.0 316.2"/>
<path d="M606.0 328.3L652.0 374.3"/>
<path d="M703.4 718.5L606.0 621.1"/>
<path d="M667.3 718.5L714.0 671.8"/>
<path d="M606.0 659.7L652.0 613.7"/>
<path d="M958.6 269.5L1056.0 366.9"/>
<path d="M994.7 269.5L948.0 316.2"/>
<path d="M1056.0 328.3L1010.0 374.3"/>
<path d="M958.6 718.5L1056.0 621.1"/>
<path d="M994.7 718.5L948.0 671.8"/>
<path d="M1056.0 659.7L1010.0 613.7"/>
<path d="M617.6 269.5L659 310.9M606 280.2L651 325.2"/>
</g>
<g fill="#cd1b24">
<rect x="657.3" y="264" width="5" height="1.2"/><rect x="601" y="320.9" width="1.2" height="5"/>
<rect x="705.9" y="264" width="5" height="1.2"/><rect x="601" y="369.5" width="1.2" height="5"/>
<rect x="948.9" y="264" width="5" height="1.2"/><rect x="601" y="612.5" width="1.2" height="5"/>
<rect x="997.5" y="264" width="5" height="1.2"/><rect x="601" y="661.1" width="1.2" height="5"/>
</g>
<g fill="none" stroke="#ff20ff" stroke-width="1">
<circle cx="659.8" cy="274.5" r="4"/><circle cx="659.8" cy="712.4" r="4"/>
<circle cx="611.5" cy="323.4" r="4"/>
<circle cx="708.4" cy="274.5" r="4"/><circle cx="708.4" cy="712.4" r="4"/>
<circle cx="611.5" cy="372.0" r="4"/>
<circle cx="757.0" cy="274.5" r="4"/><circle cx="757.0" cy="712.4" r="4"/>
<circle cx="611.5" cy="420.6" r="4"/>
<circle cx="805.6" cy="274.5" r="4"/><circle cx="805.6" cy="712.4" r="4"/>
<circle cx="611.5" cy="469.2" r="4"/>
<circle cx="854.2" cy="274.5" r="4"/><circle cx="854.2" cy="712.4" r="4"/>
<circle cx="611.5" cy="517.8" r="4"/>
<circle cx="902.8" cy="274.5" r="4"/><circle cx="902.8" cy="712.4" r="4"/>
<circle cx="611.5" cy="566.4" r="4"/>
<circle cx="951.4" cy="274.5" r="4"/><circle cx="951.4" cy="712.4" r="4"/>
<circle cx="611.5" cy="615.0" r="4"/>
<circle cx="1000.0" cy="274.5" r="4"/><circle cx="1000.0" cy="712.4" r="4"/>
<circle cx="611.5" cy="663.6" r="4"/>
</g><g fill="none" stroke="#28e0e0" stroke-width="1">
<circle cx="1047" cy="323.4" r="4"/>
<circle cx="1047" cy="372.0" r="4"/>
<circle cx="1047" cy="420.6" r="4"/>
<circle cx="1048.5" cy="469.2" r="4"/>
<circle cx="1048.5" cy="517.8" r="4"/>
<circle cx="1048.5" cy="566.4" r="4"/>
<circle cx="1048.5" cy="615.0" r="4"/>
<circle cx="1048.5" cy="663.6" r="4"/>
</g>
<g fill="#5a1078">
<rect x="658.3" y="274" width="3" height="1.2"/><rect x="658.3" y="712" width="3" height="1.2"/><rect x="610" y="322.9" width="3" height="1.2"/>
<rect x="706.9" y="274" width="3" height="1.2"/><rect x="706.9" y="712" width="3" height="1.2"/><rect x="610" y="371.5" width="3" height="1.2"/>
<rect x="755.5" y="274" width="3" height="1.2"/><rect x="755.5" y="712" width="3" height="1.2"/><rect x="610" y="420.1" width="3" height="1.2"/>
<rect x="804.1" y="274" width="3" height="1.2"/><rect x="804.1" y="712" width="3" height="1.2"/><rect x="610" y="468.7" width="3" height="1.2"/>
<rect x="852.7" y="274" width="3" height="1.2"/><rect x="852.7" y="712" width="3" height="1.2"/><rect x="610" y="517.3" width="3" height="1.2"/>
<rect x="901.3" y="274" width="3" height="1.2"/><rect x="901.3" y="712" width="3" height="1.2"/><rect x="610" y="565.9" width="3" height="1.2"/>
<rect x="949.9" y="274" width="3" height="1.2"/><rect x="949.9" y="712" width="3" height="1.2"/><rect x="610" y="614.5" width="3" height="1.2"/>
<rect x="998.5" y="274" width="3" height="1.2"/><rect x="998.5" y="712" width="3" height="1.2"/><rect x="610" y="663.1" width="3" height="1.2"/>
</g><g fill="#1a4a6a">
<rect x="1045.5" y="322.9" width="3" height="1.2"/>
<rect x="1045.5" y="371.5" width="3" height="1.2"/>
<rect x="1045.5" y="420.1" width="3" height="1.2"/>
<rect x="1047.0" y="468.7" width="3" height="1.2"/>
<rect x="1047.0" y="517.3" width="3" height="1.2"/>
<rect x="1047.0" y="565.9" width="3" height="1.2"/>
<rect x="1047.0" y="614.5" width="3" height="1.2"/>
<rect x="1047.0" y="663.1" width="3" height="1.2"/>
</g>
<g stroke="#00ee00" stroke-width="1.1" fill="none">
<path d="M592.5 751.2H1069.5"/>
<path d="M592.5 737.3V764.6M582.9 760.9L602.7 741.2"/>
<path d="M831.0 737.3V764.6M821.4 760.9L841.2 741.2"/>
<path d="M1069.5 737.3V764.6M1059.9 760.9L1079.7 741.2"/>
<path d="M1107.5 255.5V732.5"/>
<path d="M1092 255.5H1121M1097 245.6L1117 265.0"/>
<path d="M1092 494.0H1121M1097 484.1L1117 503.5"/>
<path d="M1092 732.5H1121M1097 722.6L1117 742.0"/>
</g>
<g font-family="Liberation Serif, serif" fill="#00ee00" font-size="20" text-anchor="middle">
<text x="832.5" y="249.8">8C22</text>
<text transform="translate(584.3 491) rotate(-90)">8C22</text>
<text transform="translate(1087.3 492.5) rotate(-90)" font-size="20">BJ</text>
</g>
<g font-family="Liberation Serif, serif" fill="#fff" font-size="19.7" text-anchor="middle">
<text x="711" y="777">500</text><text x="949.5" y="777">500</text>
<text x="1126.2" y="381">500</text><text x="1126.2" y="619.7">500</text>
</g>
</svg>
<div class="a" style="left:457px;top:881px;width:820px;height:30px;background:#fff"></div>
<div class="a" style="left:459.2px;top:884.3px;width:24.2px;height:24.4px;background:#fff;border:1px solid #b4b4b4;border-radius:3.5px"></div>
<div class="a" style="left:484.2px;top:884.3px;width:24.2px;height:24.4px;background:#d7e6fb;border:1px solid #3b88ea;border-radius:3.5px"></div>
<div class="a" style="left:509.1px;top:884.3px;width:24.8px;height:24.4px;background:#d7e6fb;border:1px solid #3b88ea;border-radius:3.5px"></div>
<div class="a" style="left:534.7px;top:884.3px;width:24.1px;height:24.4px;background:#fff;border:1px solid #b4b4b4;border-radius:3.5px"></div>
<svg class="a" style="left:459px;top:884px" width="102" height="26" viewBox="459 884 102 26"><g fill="none" stroke="#3a4560" stroke-width="1.1"><path d="M464.8 890.4V901.7H477M464.8 897.1H468.6V901.7"/><path d="M488.4 902.6L503 888.2"/><path d="M520.8 889.3V902.6M513.2 902.6H528"/></g><rect x="494.3" y="894.5" width="2.4" height="2.4" fill="#fff" stroke="#2f7fe6" stroke-width="0.8"/><circle cx="520.7" cy="902.6" r="1.3" fill="#fff" stroke="#2f7fe6" stroke-width="0.8"/><path d="M538.2 893.8H544.4M541.3 890.7V896.9" stroke="#1f6fe0" stroke-width="1.2"/><rect x="544.1" y="898.5" width="9.8" height="3.6" fill="#1f6fe0"/><rect x="545" y="899.3" width="1.5" height="1.8" fill="#cfe0fa"/></svg>
<div class="t j" style="left:559.3px;top:888.5px;font-size:12px;letter-spacing:0.08px;color:#222;width:656.95px">(X: -710 Y: -13)左键或 Shift+ 左键指定起点（可通过快捷键F4改变箍筋线和纵筋点的相对位置）;按右键中止或 ESC 键取消;</div>
<svg class="a" style="left:1263px;top:896px" width="12" height="12" viewBox="0 0 12 12"><g fill="#666"><rect x="8" y="2" width="2" height="2"/><rect x="5" y="5" width="2" height="2"/><rect x="8" y="5" width="2" height="2"/><rect x="2" y="8" width="2" height="2"/><rect x="5" y="8" width="2" height="2"/><rect x="8" y="8" width="2" height="2"/></g></svg>
<svg class="a" style="left:50px;top:898px" width="130" height="58" viewBox="50 898 130 58"><ellipse cx="114.5" cy="927.8" rx="61.3" ry="26.8" fill="none" stroke="#e8343a" stroke-width="1"/></svg>
</body></html>
